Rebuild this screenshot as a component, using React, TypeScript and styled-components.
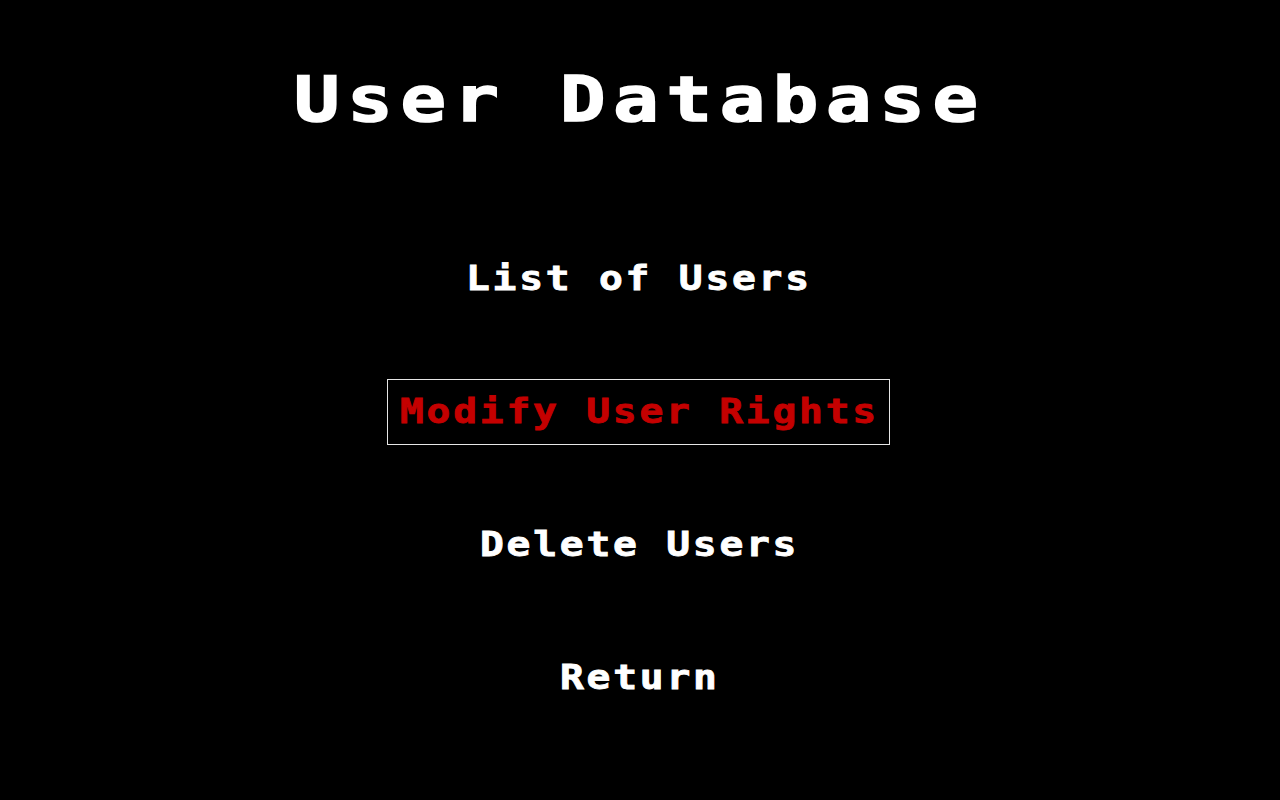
import React from "react";
import styled, { createGlobalStyle } from "styled-components";

const GlobalStyle = createGlobalStyle`
  html, body {
    margin: 0;
    padding: 0;
    background: #000;
  }
  body {
    font-family: "DejaVu Sans Mono", "Liberation Mono", monospace;
  }
`;

const STRETCH = 1.2;
const TITLE_ADV = 53.2;
const ITEM_ADV = 26.6;

const Screen = styled.div`
  width: 1280px;
  height: 800px;
  background: #000;
  display: flex;
  flex-direction: column;
  align-items: center;
  box-sizing: border-box;
  padding-top: 64px;
`;

const Title = styled.h1`
  margin: 0 8px 0 0;
  color: #fff;
  font-family: "DejaVu Sans Mono", "Liberation Mono", monospace;
  font-weight: bold;
  font-size: 63px;
  line-height: 72px;
  display: flex;
`;

const Stretched = styled.span<{ $spacing: number; $stroke: number }>`
  display: inline-block;
  white-space: pre;
  letter-spacing: ${(p) => p.$spacing}px;
  transform: scaleX(${STRETCH});
  transform-origin: left center;
  -webkit-text-stroke: ${(p) => p.$stroke}px currentColor;
`;

const Fit = styled.span`
  display: inline-block;
  overflow: visible;
`;

const Menu = styled.ul`
  list-style: none;
  margin: 110px 3px 0 0;
  padding: 0;
  display: flex;
  flex-direction: column;
  align-items: center;
  gap: 67px;
`;

const Item = styled.li<{ $selected?: boolean }>`
  box-sizing: border-box;
  height: 66px;
  display: flex;
  align-items: center;
  justify-content: center;
  padding: 0 13px 0 12px;
  border: 1px solid ${(p) => (p.$selected ? "#e6e6e6" : "transparent")};
  color: ${(p) => (p.$selected ? "#c40000" : "#fff")};
  font-family: "DejaVu Sans Mono", "Liberation Mono", monospace;
  font-weight: bold;
  font-size: 33px;
  line-height: 40px;
  cursor: pointer;
`;

const items = ["List of Users", "Modify User Rights", "Delete Users", "Return"];

function StretchText({
  text,
  adv,
  size,
  stroke,
}: {
  text: string;
  adv: number;
  size: number;
  stroke: number;
}) {
  const spacing = adv / STRETCH - size * 0.602;
  const width = text.length * adv - (adv - size * 0.602 * STRETCH);
  return (
    <Fit style={{ width }}>
      <Stretched $spacing={spacing} $stroke={stroke}>
        {text}
      </Stretched>
    </Fit>
  );
}

export default function App() {
  return (
    <>
      <GlobalStyle />
      <Screen>
        <Title>
          <StretchText text="User Database" adv={TITLE_ADV} size={63} stroke={1.6} />
        </Title>
        <Menu>
          {items.map((label) => (
            <Item key={label} $selected={label === "Modify User Rights"}>
              <StretchText text={label} adv={ITEM_ADV} size={33} stroke={0.8} />
            </Item>
          ))}
        </Menu>
      </Screen>
    </>
  );
}
